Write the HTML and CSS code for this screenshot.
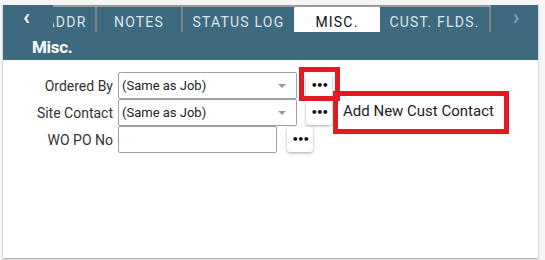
FILE: index.html
```html
<!DOCTYPE html>
<html>
	<head>
		<meta charset="utf-8" />
		<title>Misc.</title>
		<link rel="stylesheet" href="styles.css">
	</head>
	<body>
		<div class="card">
			<div class="header">
				<div class="tabbar">
					<div class="arrow left">&lsaquo;</div>
					<div class="tabs">
						<div class="tab addr sep">ADDR</div>
						<div class="tab notes sep">NOTES</div>
						<div class="tab status">STATUS LOG</div>
						<div class="tab misc on">MISC.</div>
						<div class="tab cust sep">CUST. FLDS.</div>
					</div>
					<div class="arrow right">&rsaquo;</div>
				</div>
				<div class="title">Misc.</div>
			</div>
			<div class="form">
				<div class="row">
					<label>Ordered By</label>
					<div class="select">(Same as Job)<span class="caret"></span></div>
					<button class="more first">&bull;&bull;&bull;</button>
				</div>
				<div class="row">
					<label>Site Contact</label>
					<div class="select">(Same as Job)<span class="caret"></span></div>
					<button class="more">&bull;&bull;&bull;</button>
				</div>
				<div class="row">
					<label>WO PO No</label>
					<div class="input"></div>
					<button class="more third">&bull;&bull;&bull;</button>
				</div>
				<div class="tip">Add New Cust Contact</div>
				<div class="mark mark1"></div>
				<div class="mark mark2"></div>
			</div>
		</div>
	</body>
</html>
```

FILE: styles.css
```css
*{
	margin:0;
	padding:0;
	box-sizing:border-box;
}
body{
	background:#f6f6f6;
	font-family:Roboto, "Liberation Sans", Arial, sans-serif;
	width:545px;
	height:260px;
	overflow:hidden;
}
.card{
	margin:5px 0 0 3px;
	width:535px;
	height:253px;
	background:#fff;
	box-shadow:0 1px 2px rgba(0,0,0,.35);
}
.header{
	background:#3e6a80;
	height:55px;
}
.tabbar{
	display:flex;
	height:27px;
}
.arrow{
	color:#fff;
	font-size:22px;
	font-weight:bold;
	line-height:24px;
	text-align:center;
}
.arrow.left{
	width:50px;
	padding-right:3px;
}
.arrow.right{
	width:46px;
	color:#7f9fb2;
	padding-left:4px;
}
.tabs{
	width:438px;
	display:flex;
	overflow:hidden;
	border-top:2px solid #9a9a9a;
}
.tab{
	flex:none;
	height:25px;
	line-height:31px;
	font-size:14px;
	letter-spacing:1.2px;
	color:#dae5ec;
	text-align:center;
}
.tab.sep{
	border-right:2px solid #808080;
}
.addr{
	width:60px;
	margin-left:-16px;
}
.notes{
	width:86px;
}
.status{
	width:111px;
}
.misc{
	width:86px;
	background:#fff;
	color:#111;
	border-radius:3px 3px 0 0;
	margin-top:-1px;
	height:26px;
	line-height:33px;
}
.cust{
	width:111px;
}
.title{
	color:#fff;
	font-size:17px;
	font-weight:bold;
	padding:5px 0 0 29px;
	letter-spacing:-0.3px;
}
.form{
	position:relative;
	padding-top:12px;
}
.row{
	display:flex;
	align-items:center;
	height:27px;
}
.row label{
	width:110px;
	margin-right:5px;
	text-align:right;
	font-size:14px;
	color:#333;
}
.select,.input{
	height:27px;
	border:1px solid #a0a0a0;
	border-radius:2px;
	font-size:13px;
	color:#222;
	line-height:25px;
	padding-left:3px;
	position:relative;
}
.select{
	width:179px;
}
.input{
	width:159px;
}
.caret{
	position:absolute;
	right:10px;
	top:11px;
	border-left:4px solid transparent;
	border-right:4px solid transparent;
	border-top:4px solid #999;
}
.more{
	margin-left:9px;
	width:26px;
	height:25px;
	border:none;
	background:#fff;
	border-radius:3px;
	box-shadow:0 1px 3px rgba(0,0,0,.35);
	font-size:11px;
	font-weight:bold;
	letter-spacing:-1.5px;
	color:#111;
	font-family:"DejaVu Sans", sans-serif;
}
.more.third{
	margin-left:10px;
}
.tip{
	position:absolute;
	left:335px;
	top:36px;
	width:166px;
	height:33px;
	background:#fff;
	box-shadow:0 1px 3px rgba(0,0,0,.3);
	font-size:15px;
	color:#222;
	line-height:30px;
	padding-left:5px;
}
.mark{
	position:absolute;
	border:5px solid #e01b22;
}
.mark1{
	left:296px;
	top:7px;
	width:41px;
	height:34px;
}
.mark2{
	left:330px;
	top:31px;
	width:176px;
	height:43px;
}
```
